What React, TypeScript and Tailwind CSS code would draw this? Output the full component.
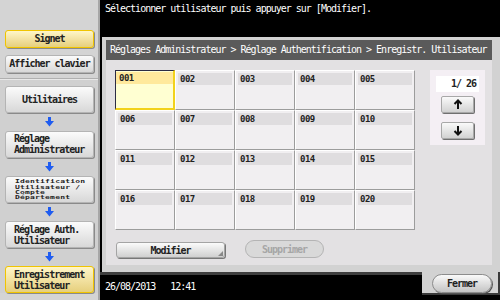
import React from 'react';

const mono = { fontFamily: '"DejaVu Sans Mono", "Liberation Mono", monospace' };

function BlueArrow() {
  return (
    <div className="flex h-[18px] items-center justify-center">
      <svg width="9" height="10" viewBox="0 0 9 10">
        <rect x="3" y="0" width="3" height="5" fill="#1f5cf0" />
        <polygon points="0,4 9,4 4.5,9.5" fill="#1f5cf0" />
      </svg>
    </div>
  );
}

function SideButton({
  children,
  active,
  className = '',
}: {
  children: React.ReactNode;
  active?: boolean;
  className?: string;
}) {
  return (
    <div
      className={
        'ml-[5px] w-[89px] rounded-[3px] border shadow-[1px_1px_0_#8a8a8a] ' +
        (active
          ? 'border-[#f0c400] bg-gradient-to-b from-[#fff6c8] to-[#e6cf7c] '
          : 'border-[#b4b4b4] bg-gradient-to-b from-[#fbfbfb] to-[#d8d8d8] ') +
        className
      }
    >
      {children}
    </div>
  );
}

function ArrowIcon({ down }: { down?: boolean }) {
  return (
    <svg width="10" height="11" viewBox="0 0 10 11" className={down ? 'rotate-180' : ''}>
      <path d="M5 10 V2 M1.5 5 L5 1.5 L8.5 5" stroke="#111" strokeWidth="2" fill="none" />
    </svg>
  );
}

function Cell({ n, selected }: { n: number; selected?: boolean }) {
  const label = String(n).padStart(3, '0');
  if (selected) {
    return (
      <div className="h-[40px] w-[60px] border-l-[1.5px] border-t-[1.5px] border-r-2 border-b-2 border-l-[#2c2c44] border-t-[#2c2c44] border-r-[#f2d21c] border-b-[#f2d21c] bg-[#ffffd2]">
        <div className="mt-[1px] h-[12px] bg-[#ffe99c] pl-[3px] text-[9px] font-bold leading-[12px] tracking-[-0.5px] text-[#222]">
          {label}
        </div>
      </div>
    );
  }
  return (
    <div className="h-[40px] w-[60px] border-l border-t border-r border-b border-l-white border-t-white border-r-[#9c9c9c] border-b-[#9c9c9c] bg-[#f1eff1]">
      <div className="mx-[2px] mt-[2px] h-[12px] bg-[#dfdddf] pl-[2px] text-[9px] font-bold leading-[12px] tracking-[-0.5px] text-[#222]">
        {label}
      </div>
    </div>
  );
}

export default function App() {
  const cells = Array.from({ length: 20 }, (_, i) => i + 1);

  return (
    <div className="flex h-[300px] w-[500px] overflow-hidden bg-black text-[10px]" style={mono}>
      {/* sidebar */}
      <div className="flex w-[100px] shrink-0 flex-col border-r-2 border-[#a6a6a6] bg-[#d4d4d4]">
        <div className="flex h-[79px] flex-col gap-[7px] border-b border-b-[#b0b0b0] pt-[30px]">
          <SideButton active className="h-[18px] text-center font-bold leading-[16px] tracking-[-1px] text-[#222]">
            Signet
          </SideButton>
          <SideButton className="h-[18px] text-center font-bold leading-[16px] tracking-[-1px] text-[#222]">
            Afficher clavier
          </SideButton>
        </div>
        <div className="flex flex-col border-t border-t-[#e8e8e8] bg-[#d0d0d0] pt-[6px]">
          <SideButton className="flex h-[27px] items-center justify-center font-bold tracking-[-1px] text-[#222]">
            Utilitaires
          </SideButton>
          <BlueArrow />
          <SideButton className="h-[27px] pl-[8px] pt-[1px] font-bold leading-[11px] tracking-[-1px] text-[#222]">
            Réglage
            <br />
            Administrateur
          </SideButton>
          <BlueArrow />
          <SideButton className="h-[27px] pl-[9px] pt-[2px] text-[#222]">
            <div className="origin-top-left scale-y-[0.68] text-[8px] font-bold leading-[8px] tracking-[0.2px]">
              Identification
              <br />
              Utilisateur /
              <br />
              Compte
              <br />
              Département
            </div>
          </SideButton>
          <BlueArrow />
          <SideButton className="h-[27px] pl-[8px] pt-[2px] font-bold leading-[11px] tracking-[-1px] text-[#222]">
            Réglage Auth.
            <br />
            Utilisateur
          </SideButton>
          <BlueArrow />
          <SideButton active className="h-[27px] pl-[8px] pt-[2px] font-bold leading-[11px] tracking-[-1px] text-[#222]">
            Enregistrement
            <br />
            Utilisateur
          </SideButton>
        </div>
      </div>

      {/* main */}
      <div className="flex flex-1 flex-col">
        <div className="h-[37px] pl-[5px] pt-[3px] leading-[12px] tracking-[-1px] text-white">
          Sélectionner utilisateur puis appuyer sur [Modifier].
        </div>

        <div className="ml-[2px] h-[235px] bg-[#d2d2d2] pb-[7px] pl-[4px] pr-[8px] pt-[3px]">
          <div className="flex h-full flex-col bg-[#e3e1e3]">
            <div className="h-[20px] bg-[#5a5a5a] pl-[4px] leading-[20px] tracking-[-1px] text-white">
              Réglages Administrateur &gt; Réglage Authentification &gt; Enregistr. Utilisateur
            </div>

            <div className="mt-[10px] flex">
              <div className="ml-[9px] grid w-[300px] grid-cols-5">
                {cells.map((n) => (
                  <Cell key={n} n={n} selected={n === 1} />
                ))}
              </div>
              <div className="ml-[15px] flex h-[75px] w-[55px] flex-col bg-[#f4eff4]">
                <div className="mx-[6px] mt-[6px] h-[16px] bg-white pr-[3px] text-right font-bold leading-[16px] tracking-[-1px] text-[#222]">
                  1/ 26
                </div>
                <div className="ml-[11px] mt-[4px] flex h-[17px] w-[33px] items-center justify-center rounded-[2px] border border-[#a8a8a8] bg-gradient-to-b from-[#fafafa] to-[#d2d2d2] shadow-[1px_1px_0_#707070]">
                  <ArrowIcon />
                </div>
                <div className="ml-[11px] mt-[9px] flex h-[17px] w-[33px] items-center justify-center rounded-[2px] border border-[#a8a8a8] bg-gradient-to-b from-[#fafafa] to-[#d2d2d2] shadow-[1px_1px_0_#707070]">
                  <ArrowIcon down />
                </div>
              </div>
            </div>

            <div className="mt-[10px] flex items-start">
              <div className="relative ml-[10px] mt-[2px] flex h-[16px] w-[109px] items-center justify-center rounded-[3px] border border-[#a4a4a4] bg-gradient-to-b from-[#fbfbfb] to-[#d0d0d0] font-bold tracking-[-1px] text-[#222] shadow-[1px_1px_0_#777]">
                Modifier
                <svg width="5" height="5" viewBox="0 0 5 5" className="absolute bottom-[1px] right-[1px]">
                  <polygon points="5,0 5,5 0,5" fill="#888" />
                </svg>
              </div>
              <div className="ml-[20px] flex h-[18px] w-[79px] items-center justify-center rounded-full border border-[#b4b4b4] bg-[#d9d9d9] font-bold tracking-[-1px] text-[#a6a6a6]">
                Supprimer
              </div>
            </div>
          </div>
        </div>

        <div className="flex h-[28px]">
          <div className="flex-1 whitespace-pre border-t-[3px] border-[#3e3e3e] pl-[5px] pt-[6px] leading-[12px] tracking-[-1px] text-white">
            26/08/2013   12:41
          </div>
          <div className="h-[23px] w-[78px] border-b-2 border-r-2 border-[#3a3a3a] bg-[#d2d2d2] pl-[10px] pt-[2px]">
            <div className="flex h-[19px] w-[60px] items-center justify-center rounded-full border border-[#8c8c8c] bg-gradient-to-b from-[#fafafa] to-[#c4c4c4] font-bold tracking-[-1px] text-[#222] shadow-[1px_1px_0_#555]">
              Fermer
            </div>
          </div>
        </div>
      </div>
    </div>
  );
}
